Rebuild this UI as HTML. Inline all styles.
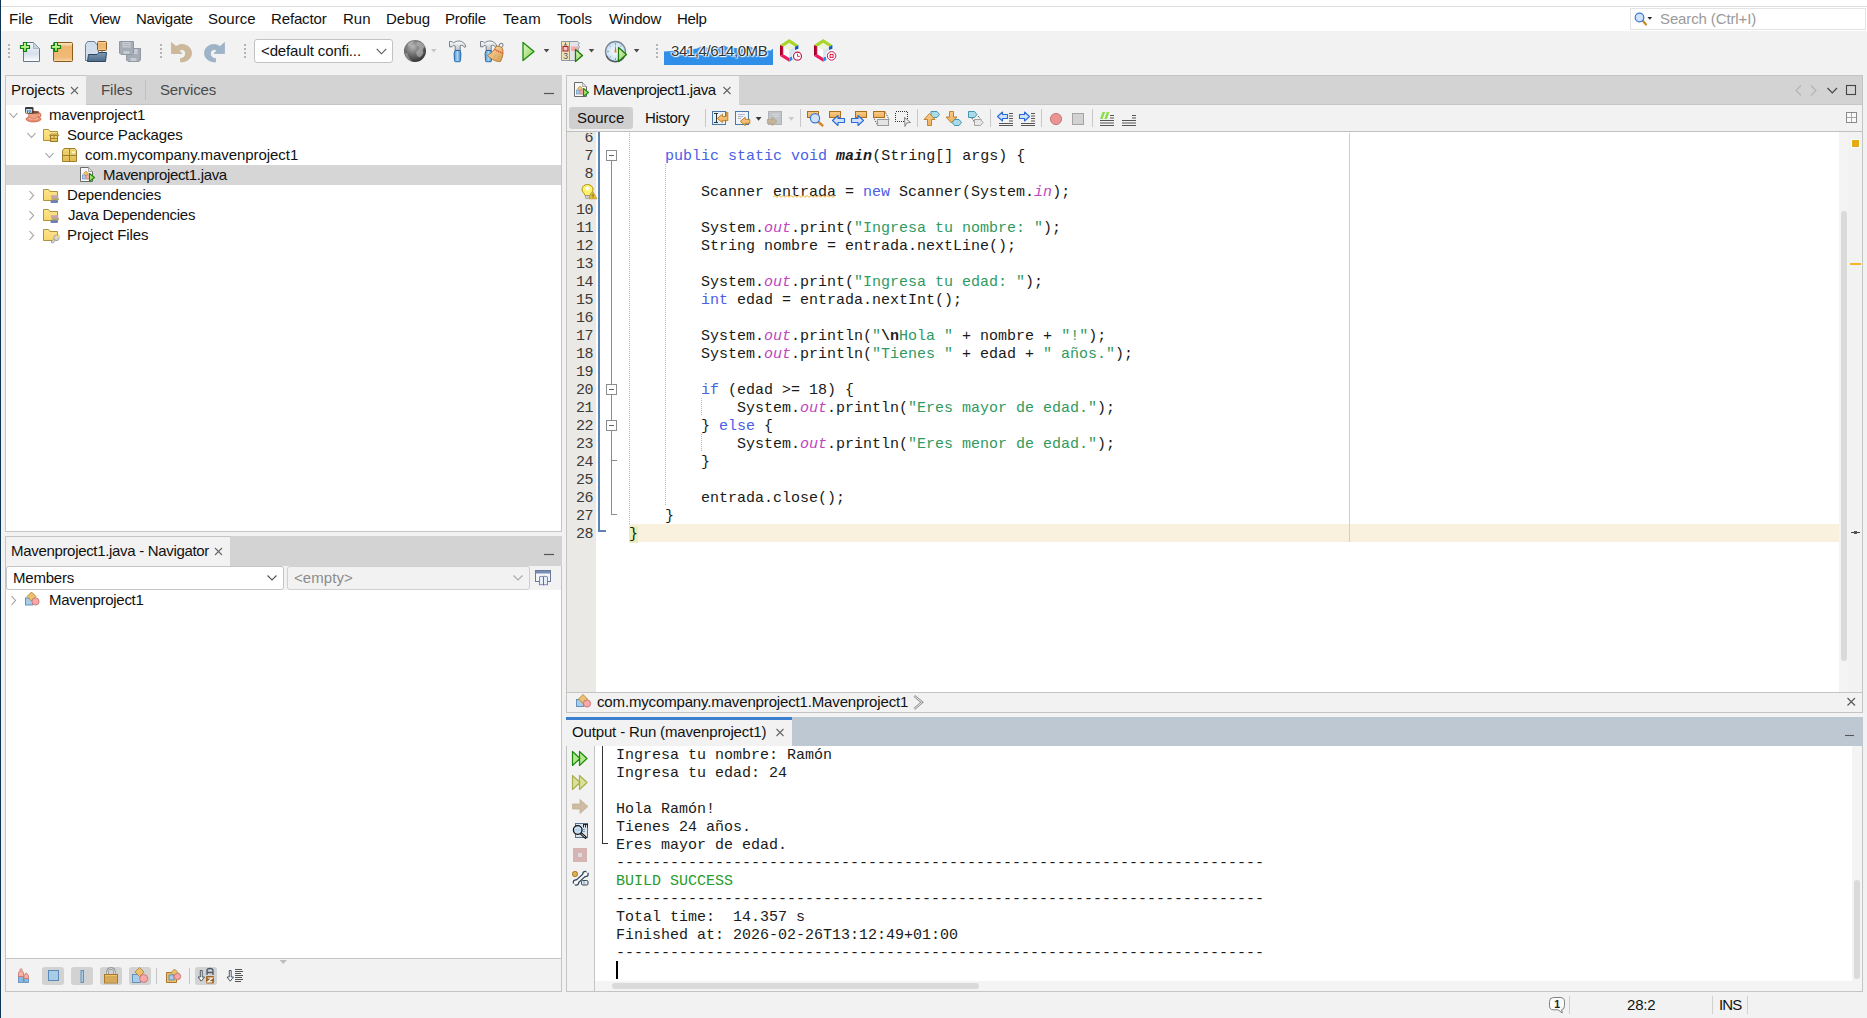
<!DOCTYPE html>
<html>
<head>
<meta charset="utf-8">
<title>NetBeans</title>
<style>
*{box-sizing:border-box;margin:0;padding:0}
html,body{width:1867px;height:1018px;overflow:hidden;background:#f2f2f2}
body{position:relative;font-family:"Liberation Sans",sans-serif;font-size:15px;color:#111;}
.a{position:absolute}
.t{position:absolute;white-space:pre;line-height:20px;height:20px}
.m{font-family:"Liberation Mono",monospace;font-size:15px}
svg{position:absolute;overflow:visible}
.code{position:absolute;left:629px;white-space:pre;font-family:"Liberation Mono",monospace;font-size:15px;line-height:18px;height:18px;color:#1a1a1a}
.ln{position:absolute;left:567px;width:26px;text-align:right;font-family:"Liberation Mono",monospace;font-size:15px;line-height:18px;height:18px;color:#3a3a3a;letter-spacing:-0.5px}
.k{color:#4a60e6}
.s{color:#2f9a5f}
.f{color:#c046c0;font-style:italic}
.w{}
.e{color:#222}
.bm{background:#e6f0b8}
.out{position:absolute;left:616px;white-space:pre;font-family:"Liberation Mono",monospace;font-size:15px;line-height:18px;height:18px;color:#1a1a1a}
</style>
</head>
<body>
<!-- window chrome -->
<div class="a" style="left:0;top:0;width:1867px;height:31px;background:#fff"></div>
<div class="a" style="left:0;top:6px;width:1867px;height:1px;background:#dcdcdc"></div>
<div class="a" style="left:0;top:0;width:1px;height:1018px;background:#0f3558"></div>

<!-- MENUBAR -->
<div id="menubar">
<span class="t" style="left:9px;top:9px;letter-spacing:-0.0px">File</span>
<span class="t" style="left:48px;top:9px;letter-spacing:-0.33px">Edit</span>
<span class="t" style="left:90px;top:9px;letter-spacing:-0.67px">View</span>
<span class="t" style="left:136px;top:9px;letter-spacing:-0.29px">Navigate</span>
<span class="t" style="left:208px;top:9px;letter-spacing:0.0px">Source</span>
<span class="t" style="left:271px;top:9px;letter-spacing:-0.14px">Refactor</span>
<span class="t" style="left:343px;top:9px;letter-spacing:0.0px">Run</span>
<span class="t" style="left:386px;top:9px;letter-spacing:0.0px">Debug</span>
<span class="t" style="left:445px;top:9px;letter-spacing:-0.25px">Profile</span>
<span class="t" style="left:503px;top:9px;letter-spacing:0.34px">Team</span>
<span class="t" style="left:557px;top:9px;letter-spacing:0.0px">Tools</span>
<span class="t" style="left:609px;top:9px;letter-spacing:-0.2px">Window</span>
<span class="t" style="left:677px;top:9px;letter-spacing:-0.33px">Help</span>
</div>
<!-- search box -->
<div class="a" style="left:1630px;top:8px;width:236px;height:22px;border:1px solid #e4e4e4;background:#fff"></div>
<span class="t" style="left:1660px;top:9px;color:#9a9a9a;letter-spacing:-0.12px">Search (Ctrl+I)</span>

<!-- TOOLBAR -->
<div id="toolbar">
<svg style="left:0;top:0" width="1867" height="1018" viewBox="0 0 1867 1018">
<defs>
<linearGradient id="gPage" x1="0" y1="0" x2="0" y2="1"><stop offset="0" stop-color="#f4f7fb"/><stop offset="0.6" stop-color="#d6e0ec"/><stop offset="1" stop-color="#fdfeff"/></linearGradient>
<linearGradient id="gBox" x1="0" y1="0" x2="0" y2="1"><stop offset="0" stop-color="#fdebd2"/><stop offset="0.18" stop-color="#f3c58a"/><stop offset="0.2" stop-color="#eeb66e"/><stop offset="0.8" stop-color="#f0bb78"/><stop offset="1" stop-color="#f8d8ae"/></linearGradient>
<linearGradient id="gPlus" x1="0" y1="0" x2="0" y2="1"><stop offset="0" stop-color="#e4ffc0"/><stop offset="1" stop-color="#86e04a"/></linearGradient>
<linearGradient id="gFolderD" x1="0" y1="0" x2="0" y2="1"><stop offset="0" stop-color="#7e9ab4"/><stop offset="1" stop-color="#4c6a88"/></linearGradient>
<linearGradient id="gGreen" x1="0" y1="0" x2="1" y2="1"><stop offset="0" stop-color="#e6f8d2"/><stop offset="1" stop-color="#7fd048"/></linearGradient>
<radialGradient id="gGlobe" cx="0.4" cy="0.3" r="0.75"><stop offset="0" stop-color="#b8b8b8"/><stop offset="0.5" stop-color="#6e6e6e"/><stop offset="1" stop-color="#2e2e2e"/></radialGradient>
<linearGradient id="gHandle" x1="0" y1="0" x2="1" y2="0"><stop offset="0" stop-color="#4a90d0"/><stop offset="0.5" stop-color="#a8d4f4"/><stop offset="1" stop-color="#3c80c0"/></linearGradient>
<linearGradient id="gHead" x1="0" y1="0" x2="0" y2="1"><stop offset="0" stop-color="#ffffff"/><stop offset="1" stop-color="#b8bec6"/></linearGradient>
<radialGradient id="gClock" cx="0.5" cy="0.5" r="0.6"><stop offset="0" stop-color="#f6fbff"/><stop offset="0.7" stop-color="#cfe3f4"/><stop offset="1" stop-color="#a8c4dc"/></radialGradient>
<linearGradient id="gBroom" x1="0" y1="0" x2="1" y2="1"><stop offset="0" stop-color="#fbe2b4"/><stop offset="1" stop-color="#d89a4a"/></linearGradient>
</defs>
<!-- grips -->
<g fill="#b4b4b4">
<path d="M8,44h2v2h-2zM8,48h2v2h-2zM8,52h2v2h-2zM8,56h2v2h-2z"/>
<path d="M160,44h2v2h-2zM160,48h2v2h-2zM160,52h2v2h-2zM160,56h2v2h-2z"/>
<path d="M244,44h2v2h-2zM244,48h2v2h-2zM244,52h2v2h-2zM244,56h2v2h-2z"/>
<path d="M656,44h2v2h-2zM656,48h2v2h-2zM656,52h2v2h-2zM656,56h2v2h-2z"/>
</g>
<!-- new file -->
<path d="M23.5,42.5H33.5L39.5,48.5V61.5H23.5Z" fill="url(#gPage)" stroke="#66788c"/>
<path d="M33.5,42.5V48.5H39.5Z" fill="#c4d2e2" stroke="#8a9aae" stroke-width="0.6"/>
<path d="M23.5,42.5h3v3h3v3h-3v3h-3v-3h-3v-3h3z" fill="url(#gPlus)" stroke="#128012" stroke-width="1.2"/>
<!-- new project -->
<rect x="53.500" y="42.500" width="19" height="19" rx="1" fill="url(#gBox)" stroke="#8c5a1c"/>
<path d="M54.500,42.500h3v3h3v3h-3v3h-3v-3h-3v-3h3z" fill="url(#gPlus)" stroke="#128012" stroke-width="1.2"/>
<!-- open project -->
<path d="M85.500,60.500V44.500L87.500,41.500H94.500L96.500,44.500H98.500V60.500Z" fill="#d2deec" stroke="#6e8096"/>
<rect x="97.500" y="41.500" width="9" height="9" rx="1" fill="url(#gBox)" stroke="#8c5a1c"/>
<path d="M102,51V53.500" stroke="#5a6e84" stroke-width="1"/>
<path d="M87.500,61.500L88.500,54.500L97,54.500L99,52.500H106.500L105.500,61.500Z" fill="url(#gFolderD)" stroke="#2e4660" stroke-linejoin="round"/>
<!-- save all (disabled) -->
<g>
<path d="M126.500,48.500H140.500V60L139,61.500H128L126.500,60Z" fill="#a4acb6" stroke="#9098a2"/>
<rect x="129.500" y="49" width="8" height="5" fill="#c8ccd2"/>
<rect x="130.500" y="58" width="6" height="3" fill="#c8ccd2"/>
<path d="M119.500,41.500H133.500V53L132,54.500H121L119.500,53Z" fill="#a4acb6" stroke="#9098a2"/>
<rect x="122.500" y="42" width="8" height="5.500" fill="#c8ccd2"/>
<path d="M123.500,43.500h6M123.500,45.500h6" stroke="#aab0b8" stroke-width="0.8"/>
<rect x="123.500" y="51" width="6" height="3" fill="#c8ccd2"/>
</g>
<!-- undo -->
<path d="M171.500,42.500L171.500,53.500L182,53.500L179,50.500C182,48.500 185.500,50 185.500,53.500C185.500,57 183,58.500 180.500,58.500L180.500,62C187,62 191.500,58.500 191.500,53C191.500,46 183,41.500 176,46.500Z" fill="#cdb899" stroke="#c0aa8a" stroke-width="0.6" stroke-linejoin="round"/>
<!-- redo -->
<path d="M224.500,42.500L224.500,53.500L214,53.500L217,50.500C214,48.500 210.500,50 210.500,53.500C210.500,57 213,58.500 215.500,58.500L215.500,62C209,62 204.500,58.500 204.500,53C204.500,46 213,41.500 220,46.500Z" fill="#9db3c7" stroke="#8fa6bc" stroke-width="0.6" stroke-linejoin="round"/>
<!-- globe -->
<circle cx="415" cy="51" r="11" fill="url(#gGlobe)"/>
<path d="M418,41.500c-2.500,1.500-2,3.500 0,4.500s1.500,3-0.500,4.500s-1.500,4.500 1,6.500c1.500,1 4,-1.500 5,-4.500c-1.500,-2-0.500,-4.500 1.500,-5.500c-1,-2.500-3.500,-5-7,-5.500z" fill="#b4b4b4" opacity="0.7"/>
<path d="M405,53c2,-0.500 3.500,1 3.500,3s2,3 3.500,5.500c-3.500,-1-7,-4-7,-8.500z" fill="#a8a8a8" opacity="0.6"/>
<path d="M408,44c2,-2 4,-2.500 6,-2.500c-1,1.500-3,2-3.500,4s-2.500,1-2.500,-1.500z" fill="#c8c8c8" opacity="0.55"/>
<path d="M431,49h5.500l-2.750,3.500z" fill="#c6c6c6"/>
<!-- hammer -->
<defs><g id="hmr">
<path d="M449.500,41.500H452L453.500,43C455,41.600 457,41 459,41C462.500,41 465,43.500 465.900,46.500L464.500,47.400C463.500,45.600 462,44.800 460.200,45.500V50.500H455.200V46C454.600,45.500 454,45.300 453.500,45.300L452,46.800H449.500Z" fill="url(#gHead)" stroke="#6c747e" stroke-width="0.900" stroke-linejoin="round"/>
<path d="M455,50.500H460.200L460.900,53.500L460.500,60.500Q460.500,61.700 459.500,61.700H455.500Q454.500,61.700 454.500,60.500L454.100,53.500Z" fill="url(#gHandle)" stroke="#1f62a4" stroke-width="0.900" stroke-linejoin="round"/>
</g></defs>
<use href="#hmr"/>
<!-- clean and build -->
<use href="#hmr" x="31"/>
<ellipse cx="501" cy="45.500" rx="1.800" ry="2.200" transform="rotate(30 501 45.500)" fill="none" stroke="#8a8e96" stroke-width="1.100"/>
<path d="M496,46.500C498.500,45.500 501,46.500 502.500,48.500C503.600,52 503,57 500.500,61.500C497,62 492,60 487.500,55.500C491,53.500 494,50.500 496,46.500Z" fill="url(#gBroom)" stroke="#a8681e" stroke-width="0.800" stroke-linejoin="round"/>
<path d="M494.500,49.500L503,53.500" stroke="#d85a30" stroke-width="1.700" stroke-dasharray="1.200,0.800"/>
<path d="M491,55.500l2,-2.500M494,58l2,-3.500M497.500,60l1.500,-4" stroke="#c88838" stroke-width="0.500" opacity="0.700"/>
<!-- run -->
<path d="M523,42.500V60.500L534,51.500Z" fill="url(#gGreen)" stroke="#1c8a0c" stroke-width="1.3" stroke-linejoin="round"/>
<path d="M543.700,49h5.600l-2.800,3.600z" fill="#4a4a4a"/>
<!-- debug -->
<path d="M561.500,41.500H577.500L579.500,43L578,45L579.500,47L578,49L579,51L577,53L578,56L576.500,58L577,60.500H561.500Z" fill="#e2e4e8" stroke="#8692a0" stroke-width="0.9"/>
<rect x="562" y="42" width="7.500" height="18" fill="#f0e4b4"/>
<path d="M569.500,42V60.500" stroke="#8692a0" stroke-width="0.9"/>
<path d="M565.500,42.500V45M564,45h3" stroke="#5a6474" stroke-width="0.9"/>
<rect x="563" y="46.500" width="5" height="4.500" fill="#f8c0c0" stroke="#b02828" stroke-width="1.1"/>
<text x="563.200" y="59.300" font-family="Liberation Sans" font-size="8.500" fill="#44546e">3</text>
<rect x="571" y="46.500" width="7" height="4.500" fill="#f8a8a8"/>
<path d="M575.500,49.500V61.500L582.500,55.500Z" fill="url(#gGreen)" stroke="#1c7a0c" stroke-width="1.3" stroke-linejoin="round"/>
<path d="M588.700,49h5.600l-2.800,3.600z" fill="#4a4a4a"/>
<!-- profile -->
<circle cx="615.500" cy="51.500" r="10" fill="url(#gClock)" stroke="#7a8894" stroke-width="1.3"/>
<path d="M606.200,55.500a10,10 0 0 0 18.600,0" fill="none" stroke="#3a3a3a" stroke-width="1.300" opacity="0.65"/>
<g stroke="#7a8ea2" stroke-width="0.8"><path d="M615.500,43v2M615.500,58v2M607,51.500h2M622,51.500h2M609.500,45.500l1.200,1.200M621.500,45.500l-1.200,1.200M609.500,57.500l1.200,-1.200"/></g>
<path d="M615.500,44L616.600,52.500H614.400Z" fill="#e07820"/>
<path d="M618.500,47.500V61.500L626.500,54.500Z" fill="url(#gGreen)" stroke="#1c7a0c" stroke-width="1.3" stroke-linejoin="round"/>
<path d="M633.800,49h5.600l-2.800,3.600z" fill="#4a4a4a"/>
<!-- memory -->
<path d="M664,65V51.500L672,51L680,50.500L690,49.500L697,48.500L702,46L706,47.500L712,48L718,47.500L724,45.500L728,47.500L736,48L744,48.500L750,46.500L754,48.500L760,50L766,50.500L771,50.500L772,49.200L773,49V65Z" fill="#2f8fe8"/>
<!-- gc icons -->
<g id="cube">
<path d="M780,45L789.200,39L798.400,45L795,46.800L789.200,43L783.400,46.800Z" fill="#a8d62a"/>
<path d="M780,45L783.400,46.800V54.200L780,56Z" fill="#a4002a"/>
<path d="M781.700,45.900L783.400,46.800V54.200L781.700,55.100Z" fill="#c40e3c"/>
<path d="M780,56L783.400,54.200L789.200,57.800V61.800Z" fill="#ea1a5c"/>
<path d="M798.400,45L795,46.800V50L798.400,48.800Z" fill="#1458c8"/>
<path d="M789.200,61.800V57.800L791.800,56.200L792.600,59.700Z" fill="#1e90f0"/>
<path d="M789.200,43L795,46.800L789.200,50.500L783.400,46.800Z" fill="#eef4dc"/>
<path d="M783.400,46.800L789.200,50.500V57.800L783.400,54.200Z" fill="#ffffff"/>
<path d="M795,46.800V54.200L789.200,57.800V50.500Z" fill="#d8e4f0"/>
</g>
<circle cx="797.500" cy="56.200" r="5.300" fill="#fff"/>
<circle cx="797.500" cy="56.200" r="4" fill="#fff" stroke="#c01848" stroke-width="1.2"/>
<path d="M797.500,53.700V56.400H799.800" fill="none" stroke="#e03060" stroke-width="1"/>
<use href="#cube" transform="translate(34,0)"/>
<circle cx="831.600" cy="55.900" r="6" fill="#fff"/>
<circle cx="831.600" cy="55.900" r="4.300" fill="#fff" stroke="#b8184c" stroke-width="1"/>
<rect x="830.100" y="54.400" width="3" height="3" fill="#fff" stroke="#ee1040" stroke-width="1"/>
</svg>
<div class="a" style="left:254px;top:39px;width:139px;height:24px;border:1px solid #c2c2c2;border-radius:3px;background:#fff"></div>
<span class="t" style="left:261px;top:41px;letter-spacing:-0.13px">&lt;default confi...</span>
<svg style="left:376px;top:48px" width="11" height="7" viewBox="0 0 11 7"><path d="M0.700,0.800L5.500,5.800L10.300,0.800" fill="none" stroke="#555" stroke-width="1.1"/></svg>
<span class="t" style="left:671px;top:41px;color:#333;text-shadow:0 0 2px #fff,0 0 2px #fff,0 0 1px #fff,1px 1px 1px #fff,-1px -1px 1px #fff;letter-spacing:-0.42px">341,4/614,0MB</span>
</div>

<!-- LEFT: PROJECTS -->
<div id="projects">
<div class="a" style="left:5px;top:75px;width:557px;height:457px;border:1px solid #c4c4c4;background:#fff"></div>
<div class="a" style="left:6px;top:75px;width:556px;height:30px;background:#d3d3d3;border-bottom:1px solid #c4c4c4"></div>
<div class="a" style="left:6px;top:75px;width:80px;height:30px;background:#f2f2f2;border-top:1px solid #c4c4c4"></div>
<span class="t" style="left:11px;top:80px;letter-spacing:-0.05px">Projects</span>
<span class="t" style="left:101px;top:80px;color:#4a4a4a;letter-spacing:-0.05px">Files</span>
<span class="t" style="left:160px;top:80px;color:#4a4a4a;letter-spacing:-0.19px">Services</span>
<div class="a" style="left:145px;top:80px;width:1px;height:20px;background:#c0c0c0"></div>
<div class="a" style="left:6px;top:165px;width:555px;height:20px;background:#d6d6d6"></div>
<span class="t" style="left:49px;top:105px;letter-spacing:-0.18px">mavenproject1</span>
<span class="t" style="left:67px;top:125px;letter-spacing:-0.13px">Source Packages</span>
<span class="t" style="left:85px;top:145px;letter-spacing:-0.06px">com.mycompany.mavenproject1</span>
<span class="t" style="left:103px;top:165px;letter-spacing:-0.35px">Mavenproject1.java</span>
<span class="t" style="left:67px;top:185px;letter-spacing:-0.15px">Dependencies</span>
<span class="t" style="left:68px;top:205px;letter-spacing:-0.27px">Java Dependencies</span>
<span class="t" style="left:67px;top:225px;letter-spacing:-0.09px">Project Files</span>
</div>

<!-- LEFT: NAVIGATOR -->
<div id="navigator">
<div class="a" style="left:5px;top:536px;width:557px;height:456px;border:1px solid #c4c4c4;background:#fff"></div>
<div class="a" style="left:6px;top:536px;width:556px;height:30px;background:#d3d3d3"></div>
<div class="a" style="left:6px;top:536px;width:224px;height:30px;background:#f2f2f2;border-top:1px solid #c4c4c4"></div>
<span class="t" style="left:11px;top:541px;letter-spacing:-0.32px">Mavenproject1.java - Navigator</span>
<div class="a" style="left:6px;top:566px;width:555px;height:24px;background:#f2f2f2"></div>
<div class="a" style="left:6px;top:566px;width:278px;height:24px;border:1px solid #c4c4c4;border-radius:3px;background:#fff"></div>
<span class="t" style="left:13px;top:568px;letter-spacing:-0.21px">Members</span>
<div class="a" style="left:287px;top:566px;width:243px;height:24px;border:1px solid #d0d0d0;border-radius:3px;background:#f2f2f2"></div>
<span class="t" style="left:294px;top:568px;color:#8c8c8c;letter-spacing:0.06px">&lt;empty&gt;</span>
<span class="t" style="left:49px;top:590px;letter-spacing:-0.3px">Mavenproject1</span>
<div class="a" style="left:6px;top:958px;width:555px;height:33px;background:#f2f2f2;border-top:1px solid #c4c4c4"></div>
</div>

<svg style="left:0;top:0" width="1867" height="1018" viewBox="0 0 1867 1018">
<defs>
<linearGradient id="gFold" x1="0" y1="0" x2="0" y2="1"><stop offset="0" stop-color="#fde68e"/><stop offset="1" stop-color="#f8d66c"/></linearGradient>
<linearGradient id="gPkg" x1="0" y1="0" x2="0" y2="1"><stop offset="0" stop-color="#f0d678"/><stop offset="1" stop-color="#e0bc50"/></linearGradient>
<g id="folder"><path d="M0.500,11.500V0.500H5.500L7,2.500H14.500V11.500Z" fill="url(#gFold)" stroke="#b09038" stroke-width="1" stroke-linejoin="round"/></g>
<g id="books"><rect x="0" y="0" width="7.500" height="2.600" rx="0.800" fill="#c8a2b2"/><rect x="0.500" y="2.600" width="7.500" height="2.400" rx="0.800" fill="#b4aa6c"/><rect x="-0.500" y="5" width="7.500" height="2.600" rx="0.800" fill="#6e80ba"/><path d="M7,0.800h1.200v1.400h-1.200z" fill="#e8e8e8"/></g>
<g id="clsicon"><rect x="0.500" y="6.500" width="7" height="7" fill="#a8cbe8" stroke="#5a8ab8" stroke-width="0.900"/><path d="M6.500,0.500L11,5L6.500,9.500L2,5Z" fill="#ecc070" stroke="#b08838" stroke-width="0.900"/><circle cx="10.500" cy="10" r="3.600" fill="#f8a8a8" stroke="#c87070" stroke-width="0.900"/></g>
<g id="xbtn"><path d="M0,0L7,7M7,0L0,7" stroke="#666" stroke-width="1.100"/></g>
</defs>
<!-- chevrons -->
<g fill="none" stroke="#9c9c9c" stroke-width="1.100">
<path d="M9.500,113L13.500,117.500L17.500,113"/>
<path d="M27.500,133L31.500,137.500L35.500,133"/>
<path d="M45.500,153L49.500,157.500L53.500,153"/>
<path d="M29.500,191L33.500,195.500L29.500,200"/>
<path d="M29.500,211L33.500,215.500L29.500,220"/>
<path d="M29.500,231L33.500,235.500L29.500,240"/>
<path d="M11.500,596L15.500,600.500L11.500,605"/>
</g>
<!-- project icon -->
<ellipse cx="33.500" cy="119" rx="7.500" ry="3" fill="#e8886a" stroke="#c06040" stroke-width="0.700"/>
<ellipse cx="33.500" cy="118.300" rx="5" ry="1.600" fill="#f8c0a8"/>
<path d="M37.500,113.500C41,112.500 42,116.500 38,117.500" fill="none" stroke="#d87858" stroke-width="1.600"/>
<path d="M28,112H39C39,116 37,119 33.500,119C30,119 28,116 28,112Z" fill="#f0a084" stroke="#c06848" stroke-width="0.700"/>
<ellipse cx="33.500" cy="112.300" rx="5.500" ry="1.500" fill="#8a4a38"/>
<rect x="25" y="107" width="8.500" height="6.500" rx="1.200" fill="#3a3a3a"/>
<text x="25.600" y="112.600" font-family="Liberation Sans" font-size="7.500" font-weight="bold" font-style="italic" fill="#fff">m</text>
<!-- source packages -->
<use href="#folder" x="43" y="129"/>
<rect x="50.500" y="135.500" width="7" height="6" fill="url(#gPkg)" stroke="#9a7a28" stroke-width="1"/>
<path d="M50.500,138.500h7M54,135.500v3" stroke="#9a7a28" stroke-width="0.800"/>
<path d="M49.500,135.500h9.500l-1,-1.500h-7.500z" fill="#e0c058" stroke="#9a7a28" stroke-width="0.600"/>
<!-- package -->
<path d="M62.500,150.500L64,148.500H75L76.500,150.500V161.500H62.500Z" fill="url(#gPkg)" stroke="#a08030" stroke-width="1" stroke-linejoin="round"/>
<path d="M62.500,155.500H76.500M69.500,148.500V161.500" stroke="#a08030" stroke-width="1"/>
<rect x="72" y="151.500" width="3" height="1.800" fill="#fff6d8"/>
<!-- java file -->
<path d="M80.500,167.500H88.500L92.500,171.500V181.500H80.500Z" fill="#f8f8f8" stroke="#6a6a6a" stroke-width="1" stroke-linejoin="round"/>
<path d="M88.500,167.500V171.500H92.500" fill="#e4e4e4" stroke="#8a8a8a" stroke-width="0.700"/>
<rect x="82.500" y="175" width="4" height="4" fill="#a8cbe8" stroke="#5a8ab8" stroke-width="0.600"/>
<path d="M86,171L88.500,173.500L86,176L83.500,173.500Z" fill="#ecc070" stroke="#b08838" stroke-width="0.600"/>
<circle cx="88" cy="177" r="2.300" fill="#f8a8a8" stroke="#c87070" stroke-width="0.600"/>
<path d="M89.500,173.500V181.500L94.500,177.500Z" fill="#a4e070" stroke="#1c8a0c" stroke-width="1.100" stroke-linejoin="round"/>
<!-- dependencies -->
<use href="#folder" x="43" y="189"/><use href="#books" x="51" y="195.300"/>
<use href="#folder" x="43" y="209"/><use href="#books" x="51" y="215.300"/>
<use href="#folder" x="43" y="229"/>
<path d="M52.300,242L55.500,238.800" stroke="#9a9a9a" stroke-width="2.800" stroke-linecap="round"/>
<path d="M52.300,242L55.500,238.800" stroke="#d8d8d8" stroke-width="1.400" stroke-linecap="round"/>
<circle cx="56.500" cy="237.800" r="2.800" fill="#d0d0d0" stroke="#9a9a9a" stroke-width="0.700"/>
<path d="M56.500,237.800L59.500,234.800" stroke="#fcdc78" stroke-width="1.800"/>
<!-- tab close / minimize -->
<use href="#xbtn" x="71" y="87"/>
<path d="M544,93.500h10" stroke="#555" stroke-width="1.200"/>
<use href="#xbtn" x="215" y="548"/>
<path d="M544,554.500h10" stroke="#555" stroke-width="1.200"/>
<!-- navigator class icon -->
<use href="#clsicon" x="25" y="591.500"/>
<!-- combo chevrons -->
<path d="M267.500,575.500L272,580L276.500,575.500" fill="none" stroke="#555" stroke-width="1.100"/>
<path d="M513.500,575.500L518,580L522.500,575.500" fill="none" stroke="#aaa" stroke-width="1.100"/>
</svg>

<!-- EDITOR -->
<div id="editor">
<div class="a" style="left:566px;top:75px;width:1297px;height:638px;border:1px solid #c4c4c4;background:#fff"></div>
<div class="a" style="left:567px;top:76px;width:1295px;height:29px;background:#d3d3d3"></div>
<div class="a" style="left:567px;top:76px;width:172px;height:29px;background:#f2f2f2"></div>
<span class="t" style="left:593px;top:80px;letter-spacing:-0.41px">Mavenproject1.java</span>
<div class="a" style="left:567px;top:105px;width:1295px;height:27px;background:#f2f2f2;border-bottom:1px solid #c0c0c0"></div>
<div class="a" style="left:740px;top:104px;width:1122px;height:1px;background:#c6c6c6"></div>
<div class="a" style="left:569px;top:107px;width:64px;height:22px;background:#cfcfcf;border-radius:3px"></div>
<span class="t" style="left:577px;top:108px;letter-spacing:-0.04px">Source</span>
<span class="t" style="left:645px;top:108px;letter-spacing:-0.34px">History</span>
<svg style="left:0;top:0" width="1867" height="1018" viewBox="0 0 1867 1018">
<defs>
<linearGradient id="gOr" x1="0" y1="0" x2="0" y2="1"><stop offset="0" stop-color="#f8cc88"/><stop offset="1" stop-color="#eeb05a"/></linearGradient>
</defs>
<g stroke="#c8c8c8" stroke-width="1"><path d="M705.500,109V127M800.500,109V127M917.500,109V127M990.500,109V127M1041.500,109V127M1092.500,109V127"/></g>
<!-- last edit -->
<rect x="712.500" y="111.500" width="13" height="13" fill="#e8f0f8" stroke="#4a78a8"/>
<path d="M714,113.500h4M716.500,113.500V122.500M714,122.500h4" stroke="#333" stroke-width="1" fill="none" shape-rendering="crispEdges"/>
<path d="M717.300,118.400L722.400,114.200V116.500H726.300V112.300H727.800V120.600H722.400V122.600Z" fill="url(#gOr)" stroke="#b87a20" stroke-width="0.9" stroke-linejoin="round"/>
<!-- back -->
<rect x="735.500" y="111.500" width="13" height="13" fill="#eef4fa" stroke="#4a78a8"/>
<path d="M738,114.500h7M738,116.500h5M738,118.500h3" stroke="#b0b8c4" stroke-width="1"/>
<path d="M740.300,121.400L745.200,117.200V119.400H749.800V123.400H745.200V125.600Z" fill="url(#gOr)" stroke="#b87a20" stroke-width="0.9" stroke-linejoin="round"/>
<path d="M755.700,117h5.800l-2.900,3.800z" fill="#3a3a3a"/>
<!-- forward disabled -->
<rect x="768.500" y="111.500" width="13" height="13" fill="#c2c6ca" stroke="#b0b4b8"/>
<path d="M772,114.500h7M774,116.500h5" stroke="#d4d8dc" stroke-width="1"/>
<path d="M777,121.400L772.200,117.200V119.400H767.400V123.400H772.200V125.600Z" fill="#c4b49a" stroke="#b4a48a" stroke-width="0.9" stroke-linejoin="round"/>
<path d="M788.400,117h5.800l-2.900,3.800z" fill="#cacaca"/>
<!-- find selection -->
<rect x="807.500" y="111.500" width="11" height="6" fill="url(#gOr)" stroke="#a8701c"/>
<path d="M818,121.500L822.500,125.500" stroke="#d08a28" stroke-width="2.400" stroke-linecap="round"/>
<circle cx="815" cy="118.300" r="4.600" fill="#cfe2fa" stroke="#3a78d8" stroke-width="1.200"/>
<!-- find prev -->
<rect x="829.500" y="111.500" width="11" height="6" fill="url(#gOr)" stroke="#a8701c"/>
<path d="M832.500,120.500L838,115.500V118.500H844.500V122.500H838V125.500Z" fill="#cfe2fa" stroke="#2a6ad8" stroke-width="1.100" stroke-linejoin="round"/>
<!-- find next -->
<rect x="855.500" y="111.500" width="11" height="6" fill="url(#gOr)" stroke="#a8701c"/>
<path d="M863.500,120.500L858,115.500V118.500H851.500V122.500H858V125.500Z" fill="#cfe2fa" stroke="#2a6ad8" stroke-width="1.100" stroke-linejoin="round"/>
<!-- toggle highlight -->
<path d="M885,111.500L889,119.500M873.500,117.500L877.500,125" stroke="#444" stroke-width="1" stroke-dasharray="1,1"/>
<rect x="873.500" y="111.500" width="11" height="6" fill="url(#gOr)" stroke="#a8701c"/>
<rect x="877.500" y="119.500" width="11" height="6" fill="#e4e4e4" stroke="#9a9a9a"/>
<!-- rect selection -->
<rect x="895.500" y="111.500" width="12" height="10" fill="none" stroke="#333" stroke-width="1" stroke-dasharray="1,1" shape-rendering="crispEdges"/>
<path d="M904.500,117.500L910.500,122.500L906.500,123L905,126.500Z" fill="#f2f2f2" stroke="#777" stroke-width="0.900" stroke-linejoin="round"/>
<!-- prev bookmark -->
<path d="M931,111.500H937L939.500,114.500L937,117.500H931Z" fill="#a8dce8" stroke="#3a8aa8" stroke-width="0.900" stroke-linejoin="round"/>
<path d="M929.500,113.500L935,119.500H931.500V125.500H927.500V119.500H924Z" fill="url(#gOr)" stroke="#b87a20" stroke-width="0.900" stroke-linejoin="round"/>
<!-- next bookmark -->
<path d="M951.500,123L946,117H949.500V111.500H953.500V117H957Z" fill="url(#gOr)" stroke="#b87a20" stroke-width="0.900" stroke-linejoin="round"/>
<path d="M954.500,119.500H959L961.500,122.500L959,125.500H954.500L952,122.500Z" fill="#a8dce8" stroke="#3a8aa8" stroke-width="0.900" stroke-linejoin="round"/>
<!-- toggle bookmark -->
<path d="M972,118L975.500,124" stroke="#333" stroke-width="1" stroke-dasharray="1,1"/>
<path d="M978,116L981,119.500" stroke="#333" stroke-width="1" stroke-dasharray="1,1"/>
<path d="M968.500,111.500H974.500L977,114.500L974.500,117.500H968.500Z" fill="#a8dce8" stroke="#3a8aa8" stroke-width="0.900" stroke-linejoin="round"/>
<path d="M974.500,119.500H980.500L983,122.500L980.500,125.500H974.500Z" fill="#e8e8e8" stroke="#9a9a9a" stroke-width="0.900" stroke-linejoin="round"/>
<!-- shift left -->
<path d="M997.500,116.500L1002.500,112V114.500H1007.500V118.500H1002.500V121Z" fill="#cfe2fa" stroke="#2a6ad8" stroke-width="1.100" stroke-linejoin="round"/>
<path d="M1009,113.500h4M1009,116h4M1009,118.500h4M1009,121h4M999,123.500h14M999,125.500h14" stroke="#555" stroke-width="1"/>
<!-- shift right -->
<path d="M1029.500,116.500L1024.500,112V114.500H1019.500V118.500H1024.500V121Z" fill="#cfe2fa" stroke="#2a6ad8" stroke-width="1.100" stroke-linejoin="round"/>
<path d="M1031,113.500h4M1031,116h4M1031,118.500h4M1031,121h4M1021,123.500h14M1021,125.500h14" stroke="#555" stroke-width="1"/>
<!-- macro record/stop -->
<circle cx="1056" cy="119" r="5.600" fill="#ea9494" stroke="#c07070" stroke-width="0.900"/>
<rect x="1072.500" y="113.500" width="11" height="11" fill="#d2d2d2" stroke="#a4a4a4"/>
<!-- comment -->
<path d="M1102.500,112h2.600l-2.500,7h-2.600zM1106.800,112h2.600l-2.500,7h-2.600z" fill="#8ade4a"/>
<path d="M1110,115.500h4M1110,118h4M1100,120.500h14M1100,123h14M1100,125.500h14" stroke="#555" stroke-width="1"/>
<!-- uncomment -->
<path d="M1132,115.500h4M1132,118h4M1122,120.500h14M1122,123h14M1122,125.500h14" stroke="#555" stroke-width="1"/>
<!-- split button right -->
<rect x="1846.500" y="112.500" width="10" height="10" fill="#fafafa" stroke="#8a8a8a"/>
<path d="M1851.500,113V122M1847,117.500H1856" stroke="#a8a8a8" stroke-width="1"/>
<!-- tab bar controls -->
<path d="M1801,85.500L1796,90.500L1801,95.500" fill="none" stroke="#b4b4b4" stroke-width="1.1"/>
<path d="M1811,85.500L1816,90.500L1811,95.500" fill="none" stroke="#b4b4b4" stroke-width="1.1"/>
<path d="M1827.500,88L1832.300,92.800L1837,88" fill="none" stroke="#444" stroke-width="1.200"/>
<rect x="1846.500" y="85.500" width="9" height="9" fill="none" stroke="#444" stroke-width="1.100"/>
</svg>
<!-- gutter -->
<div class="a" style="left:567px;top:132px;width:29px;height:560px;background:#ebe9e5"></div>
<div class="a" style="left:598px;top:132px;width:2px;height:1px;background:#5c84b6"></div>
<div class="a" style="left:1839px;top:132px;width:23px;height:1px;background:#f3f3f3"></div>
<div id="code" class="a" style="left:567px;top:133px;width:1295px;height:559px;overflow:hidden">
<div class="a" style="left:62px;top:391px;width:1210px;height:18px;background:#f9f1de"></div>
<div class="a" style="left:782px;top:0;width:1px;height:409px;background:#e6bfe6"></div>
<div class="ln" style="left:0;top:-3px">6</div>
<div class="ln" style="left:0;top:15px">7</div>
<div class="code" style="left:62px;top:15px">    <span class="k">public</span> <span class="k">static</span> <span class="k">void</span> <b><i>main</i></b>(String[] args) {</div>
<div class="ln" style="left:0;top:33px">8</div>
<div class="code" style="left:62px;top:51px">        Scanner <span class="w">entrada</span> = <span class="k">new</span> Scanner(System.<span class="f">in</span>);</div>
<div class="ln" style="left:0;top:69px">10</div>
<div class="ln" style="left:0;top:87px">11</div>
<div class="code" style="left:62px;top:87px">        System.<span class="f">out</span>.print(<span class="s">"Ingresa tu nombre: "</span>);</div>
<div class="ln" style="left:0;top:105px">12</div>
<div class="code" style="left:62px;top:105px">        String nombre = entrada.nextLine();</div>
<div class="ln" style="left:0;top:123px">13</div>
<div class="ln" style="left:0;top:141px">14</div>
<div class="code" style="left:62px;top:141px">        System.<span class="f">out</span>.print(<span class="s">"Ingresa tu edad: "</span>);</div>
<div class="ln" style="left:0;top:159px">15</div>
<div class="code" style="left:62px;top:159px">        <span class="k">int</span> edad = entrada.nextInt();</div>
<div class="ln" style="left:0;top:177px">16</div>
<div class="ln" style="left:0;top:195px">17</div>
<div class="code" style="left:62px;top:195px">        System.<span class="f">out</span>.println(<span class="s">"<b class="e">\n</b>Hola "</span> + nombre + <span class="s">"!"</span>);</div>
<div class="ln" style="left:0;top:213px">18</div>
<div class="code" style="left:62px;top:213px">        System.<span class="f">out</span>.println(<span class="s">"Tienes "</span> + edad + <span class="s">" años."</span>);</div>
<div class="ln" style="left:0;top:231px">19</div>
<div class="ln" style="left:0;top:249px">20</div>
<div class="code" style="left:62px;top:249px">        <span class="k">if</span> (edad &gt;= 18) {</div>
<div class="ln" style="left:0;top:267px">21</div>
<div class="code" style="left:62px;top:267px">            System.<span class="f">out</span>.println(<span class="s">"Eres mayor de edad."</span>);</div>
<div class="ln" style="left:0;top:285px">22</div>
<div class="code" style="left:62px;top:285px">        } <span class="k">else</span> {</div>
<div class="ln" style="left:0;top:303px">23</div>
<div class="code" style="left:62px;top:303px">            System.<span class="f">out</span>.println(<span class="s">"Eres menor de edad."</span>);</div>
<div class="ln" style="left:0;top:321px">24</div>
<div class="code" style="left:62px;top:321px">        }</div>
<div class="ln" style="left:0;top:339px">25</div>
<div class="ln" style="left:0;top:357px">26</div>
<div class="code" style="left:62px;top:357px">        entrada.close();</div>
<div class="ln" style="left:0;top:375px">27</div>
<div class="code" style="left:62px;top:375px">    }</div>
<div class="ln" style="left:0;top:393px">28</div>
<div class="code" style="left:62px;top:393px"><span class="bm">}</span></div>
<div class="a" style="left:29px;top:0;width:2px;height:559px;background:#fff"></div>
<div class="a" style="left:31px;top:0;width:2px;height:398px;background:#5c84b6"></div>
<div class="a" style="left:31px;top:397px;width:8px;height:2px;background:#5c84b6"></div>
<div class="a" style="left:62px;top:0px;width:1px;height:391px;background:repeating-linear-gradient(to bottom,#b8b8b8 0,#b8b8b8 1px,transparent 1px,transparent 2px)"></div>
<div class="a" style="left:98px;top:31px;width:1px;height:342px;background:repeating-linear-gradient(to bottom,#b8b8b8 0,#b8b8b8 1px,transparent 1px,transparent 2px)"></div>
<div class="a" style="left:134px;top:265px;width:1px;height:18px;background:repeating-linear-gradient(to bottom,#b8b8b8 0,#b8b8b8 1px,transparent 1px,transparent 2px)"></div>
<div class="a" style="left:134px;top:301px;width:1px;height:18px;background:repeating-linear-gradient(to bottom,#b8b8b8 0,#b8b8b8 1px,transparent 1px,transparent 2px)"></div>
<div class="a" style="left:44px;top:28px;width:1px;height:354px;background:#8c8c8c"></div>
<div class="a" style="left:44px;top:381px;width:6px;height:1px;background:#8c8c8c"></div>
<div class="a" style="left:44px;top:327px;width:6px;height:1px;background:#8c8c8c"></div>
<div class="a" style="left:39px;top:17px;width:11px;height:11px;border:1px solid #8c8c8c;background:#fff"></div>
<div class="a" style="left:42px;top:22px;width:5px;height:1px;background:#666"></div>
<div class="a" style="left:39px;top:251px;width:11px;height:11px;border:1px solid #8c8c8c;background:#fff"></div>
<div class="a" style="left:42px;top:256px;width:5px;height:1px;background:#666"></div>
<div class="a" style="left:39px;top:287px;width:11px;height:11px;border:1px solid #8c8c8c;background:#fff"></div>
<div class="a" style="left:42px;top:292px;width:5px;height:1px;background:#666"></div>
<svg style="left:0;top:0" width="60" height="100" viewBox="567 133 60 100">
<path d="M587.500,184.500C591,184.500 593,187 593,189.500C593,192 590.500,193 590,195.500H585C584.500,193 582,192 582,189.500C582,187 584,184.500 587.500,184.500Z" fill="#fdf36a" stroke="#b09010" stroke-width="1"/>
<circle cx="587.500" cy="188.500" r="2" fill="#fff"/>
<rect x="585.500" y="195.500" width="4" height="3" rx="0.800" fill="#d0d0d0" stroke="#8a8a8a" stroke-width="0.700"/>
<path d="M593,192L597,198.800H589.200Z" fill="#e8c030" stroke="#b08a10" stroke-width="0.600"/>
<path d="M593,194.300V196.600M593,197.400V198" stroke="#5a4a08" stroke-width="0.900"/>
</svg>
<div class="a" style="left:1272px;top:0;width:9px;height:559px;background:#f4f4f4"></div>
<div class="a" style="left:1281px;top:0;width:14px;height:559px;background:#f2f2f2"></div>
<div class="a" style="left:1274px;top:78px;width:6px;height:450px;border-radius:3px;background:#dadada"></div>
<div class="a" style="left:1285px;top:7px;width:7px;height:7px;background:#e4ac14;border:1px solid #fff;box-sizing:content-box;margin:-1px"></div>
<div class="a" style="left:1283px;top:130px;width:11px;height:2px;background:#f2b824"></div>
<div class="a" style="left:1284px;top:399px;width:9px;height:1px;background:#444"></div>
<div class="a" style="left:1287px;top:398px;width:3px;height:3px;background:#555"></div>
<svg style="left:0;top:0" width="300" height="80" viewBox="0 0 300 80"><polyline points="206.0,64.3 208.0,62.5 210.0,64.3 212.0,62.5 214.0,64.3 216.0,62.5 218.0,64.3 220.0,62.5 222.0,64.3 224.0,62.5 226.0,64.3 228.0,62.5 230.0,64.3 232.0,62.5 234.0,64.3 236.0,62.5 238.0,64.3 240.0,62.5 242.0,64.3 244.0,62.5 246.0,64.3 248.0,62.5 250.0,64.3 252.0,62.5 254.0,64.3 256.0,62.5 258.0,64.3 260.0,62.5 262.0,64.3 264.0,62.5 266.0,64.3 268.0,62.5" fill="none" stroke="#e8a820" stroke-width="0.9"/></svg>
</div>
<!-- breadcrumb -->
<div class="a" style="left:567px;top:692px;width:1295px;height:20px;background:#f2f2f2;border-top:1px solid #c4c4c4"></div>
<span class="t" style="left:597px;top:692px;letter-spacing:-0.15px">com.mycompany.mavenproject1.Mavenproject1</span>
</div>

<!-- OUTPUT -->
<div id="output">
<div class="a" style="left:566px;top:717px;width:1297px;height:275px;border:1px solid #c4c4c4;border-top:none;background:#fff"></div>
<div class="a" style="left:566px;top:717px;width:1297px;height:29px;background:#bec8d3"></div>
<div class="a" style="left:566px;top:717px;width:226px;height:29px;background:#f2f2f2;border-top:3px solid #3a7fd0"></div>
<span class="t" style="left:572px;top:722px;letter-spacing:-0.15px">Output - Run (mavenproject1)</span>
<div class="a" style="left:567px;top:746px;width:28px;height:245px;background:#f2f2f2;border-right:1px solid #c4c4c4"></div>
<div class="a" style="left:595px;top:746px;width:1267px;height:245px;overflow:hidden">
<div class="out" style="left:21px;top:1px;">Ingresa tu nombre: Ramón</div>
<div class="out" style="left:21px;top:19px;">Ingresa tu edad: 24</div>
<div class="out" style="left:21px;top:55px;">Hola Ramón!</div>
<div class="out" style="left:21px;top:73px;">Tienes 24 años.</div>
<div class="out" style="left:21px;top:91px;">Eres mayor de edad.</div>
<div class="out" style="left:21px;top:109px;">------------------------------------------------------------------------</div>
<div class="out" style="left:21px;top:127px;color:#2a9a2a">BUILD SUCCESS</div>
<div class="out" style="left:21px;top:145px;">------------------------------------------------------------------------</div>
<div class="out" style="left:21px;top:163px;">Total time:  14.357 s</div>
<div class="out" style="left:21px;top:181px;">Finished at: 2026-02-26T13:12:49+01:00</div>
<div class="out" style="left:21px;top:199px;">------------------------------------------------------------------------</div>
<div class="a" style="left:21px;top:215px;width:2px;height:18px;background:#000"></div>
<div class="a" style="left:7px;top:0;width:1px;height:98px;background:#333"></div>
<div class="a" style="left:7px;top:97px;width:6px;height:1px;background:#333"></div>
<div class="a" style="left:0;top:235px;width:1258px;height:10px;background:#f4f4f4"></div>
<div class="a" style="left:17px;top:237px;width:367px;height:6px;border-radius:3px;background:#dadada"></div>
<div class="a" style="left:1257px;top:0;width:10px;height:245px;background:#f4f4f4"></div>
<div class="a" style="left:1259px;top:134px;width:6px;height:99px;border-radius:3px;background:#dadada"></div>
</div>
</div>

<!-- STATUS -->
<div id="status">
<span class="t" style="left:1627px;top:995px;letter-spacing:-0.2px">28:2</span>
<span class="t" style="left:1719px;top:995px;letter-spacing:-0.85px">INS</span>
<div class="a" style="left:1569px;top:996px;width:1px;height:18px;background:#d0d0d0"></div>
<div class="a" style="left:1712px;top:996px;width:1px;height:18px;background:#d0d0d0"></div>
<div class="a" style="left:1747px;top:996px;width:1px;height:18px;background:#d0d0d0"></div>
</div>
<svg style="left:0;top:0" width="1867" height="1018" viewBox="0 0 1867 1018">
<!-- navigator bottom toolbar -->
<g fill="#d2d2d2"><rect x="42" y="967" width="22" height="18" rx="3"/><rect x="71" y="967" width="22" height="18" rx="3"/><rect x="100" y="967" width="22" height="18" rx="3"/><rect x="129" y="967" width="22" height="18" rx="3"/><rect x="195" y="967" width="22" height="18" rx="3"/></g>
<path d="M156.500,968V984M189.500,968V984" stroke="#c4c4c4" stroke-width="1"/>
<path d="M279.500,960h7.500l-3.750,4z" fill="#bdbdbd"/>
<!-- inherited -->
<rect x="18.500" y="976.500" width="5" height="6" fill="#8ab8e0" stroke="#5a8ab8" stroke-width="0.800"/>
<rect x="24" y="978.500" width="4.500" height="4" fill="#8ab8e0" stroke="#5a8ab8" stroke-width="0.800"/>
<path d="M18.500,976.500V973Q18.500,971.500 20,971.500V969.500Q21,967.500 22,969.500V971.500Q23.500,971.500 23.500,973V976.500Z" fill="#f8b0a8" stroke="#c87868" stroke-width="0.800"/>
<path d="M24,978.500V976Q24,975 25,975V973.800Q26.200,972.500 27.400,973.800V975Q28.500,975 28.500,976V978.500Z" fill="#f8b0a8" stroke="#c87868" stroke-width="0.800"/>
<!-- fields/static/... -->
<rect x="48.500" y="970.500" width="10" height="10" fill="#a8cce8" stroke="#5a8ab8" stroke-width="1"/>
<rect x="81" y="970.500" width="2.500" height="12" fill="#a8cce8" stroke="#5a8ab8" stroke-width="0.900"/>
<path d="M107.500,975V972Q107.500,968.500 111,968.500Q114.500,968.500 114.500,972V975" fill="none" stroke="#8a8a8a" stroke-width="2.400"/>
<path d="M107.500,975V972Q107.500,968.500 111,968.500Q114.500,968.500 114.500,972V975" fill="none" stroke="#e8e8e8" stroke-width="0.900"/>
<rect x="104.500" y="974.500" width="13" height="8.500" fill="#ecc070" stroke="#a87828" stroke-width="1"/>
<path d="M105,977h12M105,979h12M105,981h12" stroke="#b88838" stroke-width="0.800"/>
<rect x="132.500" y="974.500" width="8" height="8" fill="#a8cce8" stroke="#5a8ab8" stroke-width="0.900"/>
<path d="M139.500,967.500L144,972L139.500,976.500L135,972Z" fill="#ecc070" stroke="#b08838" stroke-width="0.900"/>
<circle cx="143.700" cy="978.500" r="4" fill="#f8a8a8" stroke="#c87070" stroke-width="0.900"/>
<!-- icon 6 -->
<path d="M166.500,972.500H176.500V982.500H166.500Z" fill="#ecc070" stroke="#a87828" stroke-width="1"/>
<path d="M174.500,969L178,972.500L174.500,976L171,972.500Z" fill="#ecc070" stroke="#b08838" stroke-width="0.900"/>
<rect x="169" y="975" width="5" height="5" fill="#a8cce8" stroke="#5a8ab8" stroke-width="0.900"/>
<circle cx="177.500" cy="976.500" r="3.200" fill="#f8a8a8" stroke="#c87070" stroke-width="0.900"/>
<!-- sort az -->
<path d="M200.300,970.500h1.900V977h2.300L201.200,981.200L198,977h2.300Z" fill="#f4f8fc" stroke="#3a4a5a" stroke-width="0.900" stroke-linejoin="round"/>
<path d="M207,975V970.500Q207,968.500 210,968.500Q213,968.500 213,970.500V975M207,972.500H213" fill="none" stroke="#4a5868" stroke-width="1.300"/>
<rect x="206" y="976" width="8" height="7.500" rx="1" fill="#a06420"/>
<path d="M207.700,978H212.300L207.700,981.800H212.300" fill="none" stroke="#fff" stroke-width="1.200"/>
<!-- sort source -->
<path d="M229.300,970.500h1.900V977h2.300L230.200,981.200L227,977h2.300Z" fill="#f4f8fc" stroke="#3a4a5a" stroke-width="0.900" stroke-linejoin="round"/>
<path d="M235,969.500h7M235,971.500h8M235,973.500h6M235,975.500h8M235,977.500h7M235,979.500h8M235,981.500h6" stroke="#555" stroke-width="1"/>
<!-- navigator combo right icon -->
<rect x="535.500" y="570.500" width="15" height="11" fill="#f4f6fa" stroke="#6a7a9a" stroke-width="1"/>
<rect x="536" y="571" width="14" height="2.500" fill="#7a8cb0"/>
<path d="M541.500,576.500Q543.500,575.500 543.500,577V585Q541.500,584 539.500,585V577Q539.500,576 541.500,576.500ZM545.500,576.500Q543.500,575.500 543.500,577V585Q545.500,584 547.500,585V577Q547.500,576 545.500,576.500Z" fill="#e8eef8" stroke="#5a6a9a" stroke-width="0.800"/>
<!-- editor tab icon + close -->
<path d="M574.500,82.500H582.500L586.500,86.500V96.500H574.500Z" fill="#f8f8f8" stroke="#6a6a6a" stroke-width="1" stroke-linejoin="round"/>
<path d="M582.500,82.500V86.500H586.500" fill="#e4e4e4" stroke="#8a8a8a" stroke-width="0.700"/>
<rect x="576.500" y="90" width="4" height="4" fill="#a8cbe8" stroke="#5a8ab8" stroke-width="0.600"/>
<path d="M580,86L582.500,88.500L580,91L577.500,88.500Z" fill="#ecc070" stroke="#b08838" stroke-width="0.600"/>
<circle cx="582" cy="92" r="2.300" fill="#f8a8a8" stroke="#c87070" stroke-width="0.600"/>
<path d="M583.500,88.500V96.500L588.500,92.500Z" fill="#a4e070" stroke="#1c8a0c" stroke-width="1.100" stroke-linejoin="round"/>
<path d="M723.500,87L730.500,94M730.500,87L723.500,94" stroke="#666" stroke-width="1.100"/>
<!-- breadcrumb -->
<rect x="576.500" y="699.500" width="7" height="7" fill="#a8cbe8" stroke="#5a8ab8" stroke-width="0.900"/>
<path d="M583,694.500L587.500,699L583,703.500L578.500,699Z" fill="#ecc070" stroke="#b08838" stroke-width="0.900"/>
<circle cx="587" cy="703.500" r="3.600" fill="#f8a8a8" stroke="#c87070" stroke-width="0.900"/>
<path d="M914.300,695.900L922,702.300L914.300,708.900" fill="none" stroke="#8e8e8e" stroke-width="2.400"/>
<path d="M914.300,695.900L922,702.300L914.300,708.900" fill="none" stroke="#f2f2f2" stroke-width="0.900"/>
<path d="M1847.500,698L1855,705.500M1855,698L1847.500,705.500" stroke="#555" stroke-width="1.100"/>
<!-- output tab close / minimize -->
<path d="M776.500,729L783.500,736M783.500,729L776.500,736" stroke="#666" stroke-width="1.100"/>
<path d="M1845,735.500h9" stroke="#555" stroke-width="1.100"/>
<!-- output toolbar -->
<path d="M572.500,751.500V765.500L580,758.500ZM579.500,751.500V765.500L587,758.500Z" fill="#b4e88c" stroke="#1c8a0c" stroke-width="1.200" stroke-linejoin="round"/>
<path d="M572.500,775.500V789.500L580,782.500ZM579.500,775.500V789.500L587,782.500Z" fill="#dce09a" stroke="#a8b04c" stroke-width="1.200" stroke-linejoin="round"/>
<path d="M572.500,804H580V799.500L588,806.500L580,813.500V809H572.500Z" fill="#cdbba2" stroke="#c0ae94" stroke-width="0.700" stroke-linejoin="round"/>
<rect x="575.500" y="823.500" width="12" height="14" fill="#dce6f0" stroke="#5a6e84" stroke-width="1"/>
<path d="M583.500,824v3.500M585.500,824v3.500M587.500,824v3.500M583.500,824.500h4" stroke="#222" stroke-width="1" fill="none"/>
<path d="M583,829.500h2M583,831.500h2" stroke="#5a8ab8" stroke-width="0.800"/>
<path d="M581,833.500L585.500,837.500" stroke="#111" stroke-width="2.600" stroke-linecap="round"/>
<path d="M581.500,834L585,837" stroke="#eee" stroke-width="0.800" stroke-linecap="round"/>
<circle cx="577.700" cy="830" r="4.300" fill="#c8dff2" stroke="#111" stroke-width="1.300"/>
<path d="M575.500,830h4" stroke="#9cc0e0" stroke-width="0.800"/>
<rect x="573" y="848" width="14" height="14" fill="#d6b4b4"/>
<rect x="578" y="853" width="4" height="4" fill="#dcdcdc"/>
<g>
<circle cx="576" cy="882.500" r="3.300" fill="#34485c"/><circle cx="585.500" cy="874" r="3.300" fill="#34485c"/>
<path d="M576,882.500L585.500,874" stroke="#34485c" stroke-width="4.400"/>
<circle cx="576" cy="882.500" r="2.100" fill="#f6f8fa"/><circle cx="585.500" cy="874" r="2.100" fill="#f6f8fa"/>
<path d="M576,882.500L585.500,874" stroke="#f6f8fa" stroke-width="2.200"/>
<path d="M574.500,884L571.500,887" stroke="#f2f2f2" stroke-width="2.400"/>
<path d="M587,872.500L590,869.500" stroke="#f2f2f2" stroke-width="2.400"/>
<rect x="581.500" y="880.500" width="6.500" height="4.500" rx="1.200" fill="#dfe5ea" stroke="#34485c" stroke-width="1"/>
<path d="M584,880.500v4.500" stroke="#8090a0" stroke-width="0.800"/>
<circle cx="575" cy="874" r="2.300" fill="#f8e49a" stroke="#b07810" stroke-width="1.200"/>
<circle cx="575" cy="874" r="0.800" fill="#b07810"/>
</g>
<!-- status bar notifications -->
<path d="M1553.500,997.500h6.500Q1564.500,997.500 1564.500,1001.500V1005.500Q1564.500,1009.500 1561.500,1009.800L1562.300,1013L1558,1009.800H1553.500Q1549.500,1009.800 1549.500,1005.500V1001.500Q1549.500,997.500 1553.500,997.500Z" fill="#fbfbfb" stroke="#707070" stroke-width="0.900"/>
<text x="1554.200" y="1007.600" font-family="Liberation Sans" font-size="10.500" font-weight="bold" fill="#222">1</text>
<!-- search icon -->
<path d="M1642.500,20.500L1646,24.500" stroke="#c88a28" stroke-width="2.200" stroke-linecap="round"/>
<circle cx="1639.500" cy="17.500" r="4.300" fill="#cfe2fa" stroke="#3a78d8" stroke-width="1.200"/>
<path d="M1647.500,17h4.600l-2.300,2.800z" fill="#222"/>
</svg>

</body>
</html>
